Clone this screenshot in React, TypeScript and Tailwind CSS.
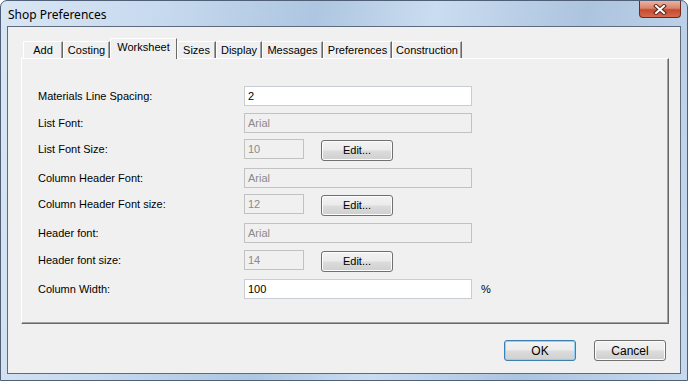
const tabs = [
  { name: 'Add', w: 'w-[40px]' },
  { name: 'Costing', w: 'w-[47px]' },
  { name: 'Worksheet', w: 'w-[67px]', active: true },
  { name: 'Sizes', w: 'w-[39px]' },
  { name: 'Display', w: 'w-[46px]' },
  { name: 'Messages', w: 'w-[61px]' },
  { name: 'Preferences', w: 'w-[69px]' },
  { name: 'Construction', w: 'w-[70px]' },
]

function TextBox({ value, disabled, small }: { value: string; disabled?: boolean; small?: boolean }) {
  return (
    <div
      className={`h-[20px] ${small ? 'w-[60px]' : 'w-[228px]'} flex items-center pl-[3px] border ${
        disabled ? 'bg-[#f0f0f0] border-[#c2c2c2] text-[#8a8a8a]' : 'bg-white border-[#c8ccd3] text-black'
      }`}
    >
      {value}
    </div>
  )
}

function Button({ label, primary, className = '' }: { label: string; primary?: boolean; className?: string }) {
  return (
    <div
      className={`w-[72px] h-[21px] rounded-[3px] border flex items-center justify-center text-black bg-[linear-gradient(180deg,#f3f3f3_0%,#ebebeb_48%,#dcdcdc_52%,#cfcfcf_100%)] ${
        primary ? 'border-[#3c7fb1] shadow-[inset_0_0_0_1px_#8fd2f4]' : 'border-[#707070] shadow-[inset_0_0_0_1px_#fcfcfc]'
      } ${className}`}
    >
      {label}
    </div>
  )
}

function Row({ label, mt, children }: { label: string; mt: string; children: React.ReactNode }) {
  return (
    <div className={`flex items-start h-[20px] ${mt}`}>
      <div className="w-[206px] h-[20px] flex items-center">{label}</div>
      {children}
    </div>
  )
}

export default function App() {
  return (
    <div className="w-[688px] h-[381px] relative overflow-hidden rounded-t-[7px] border border-[#4e5f76] bg-[linear-gradient(100deg,#d9e6f4_0%,#c6d9ee_22%,#aec6e1_42%,#cadcf0_58%,#adc4df_78%,#c6d9ee_100%)] flex flex-col text-[11px] leading-none" style={{ fontFamily: '"Liberation Sans", Arial, sans-serif' }}>
      {/* Title bar */}
      <div className="h-[25px] flex items-center pl-[7px] pt-[2px] text-[12px] text-black" style={{ fontFamily: '"Noto Sans", "Open Sans", sans-serif' }}>
        Shop Preferences
      </div>
      <div className="absolute top-0 right-[6px] w-[42px] h-[17px] rounded-b-[4px] border border-t-0 border-[#6e2b1d] bg-[linear-gradient(180deg,#eab3a4_0%,#d9836c_45%,#c54a30_55%,#d66a4c_100%)] flex items-center justify-center">
        <svg width="14" height="11" viewBox="0 0 14 11">
          <path d="M3 2 L11 9 M11 2 L3 9" stroke="#5a2418" strokeWidth="4" strokeLinecap="square" />
          <path d="M3 2 L11 9 M11 2 L3 9" stroke="#ffffff" strokeWidth="2" strokeLinecap="square" />
        </svg>
      </div>

      {/* Client area */}
      <div className="mx-[6px] h-[348px] border border-[#5d6b7d] bg-[#f0f0f0] flex flex-col pl-[13px] pt-[11px]">
        {/* Tab strip */}
        <div className="flex items-end h-[20px] pl-[2px] relative z-10">
          {tabs.map((t) =>
            t.active ? (
              <div
                key={t.name}
                className={`${t.w} h-[21px] -mb-px bg-[#f0f0f0] border-l border-t border-white border-r border-r-[#696969] flex items-center justify-center pb-[4px]`}
              >
                {t.name}
              </div>
            ) : (
              <div
                key={t.name}
                className={`${t.w} h-[17px] bg-[#f0f0f0] border-l border-t border-white border-r border-r-[#696969] shadow-[inset_-1px_0_0_#a0a0a0] flex items-center justify-center pt-[1px]`}
              >
                {t.name}
              </div>
            )
          )}
        </div>

        {/* Tab page */}
        <div className="w-[648px] h-[266px] border-l border-t border-white border-r border-b border-r-[#696969] border-b-[#696969] shadow-[inset_-1px_-1px_0_#a0a0a0] flex flex-col pl-[16px] text-black">
          <Row label="Materials Line Spacing:" mt="mt-[27px]">
            <TextBox value="2" />
          </Row>
          <Row label="List Font:" mt="mt-[7px]">
            <TextBox value="Arial" disabled />
          </Row>
          <Row label="List Font Size:" mt="mt-[6px]">
            <TextBox value="10" disabled small />
            <Button label="Edit..." className="ml-[17px] mt-[1px]" />
          </Row>
          <Row label="Column Header Font:" mt="mt-[9px]">
            <TextBox value="Arial" disabled />
          </Row>
          <Row label="Column Header Font size:" mt="mt-[6px]">
            <TextBox value="12" disabled small />
            <Button label="Edit..." className="ml-[17px] mt-[1px]" />
          </Row>
          <Row label="Header font:" mt="mt-[9px]">
            <TextBox value="Arial" disabled />
          </Row>
          <Row label="Header font size:" mt="mt-[7px]">
            <TextBox value="14" disabled small />
            <Button label="Edit..." className="ml-[17px] mt-[1px]" />
          </Row>
          <Row label="Column Width:" mt="mt-[9px]">
            <TextBox value="100" />
            <div className="ml-[9px] h-[20px] flex items-center">%</div>
          </Row>
        </div>

        {/* Dialog buttons */}
        <div className="flex mt-[16px] pl-[483px] gap-[18px] text-[12px]">
          <Button label="OK" primary />
          <Button label="Cancel" />
        </div>
      </div>
    </div>
  )
}
